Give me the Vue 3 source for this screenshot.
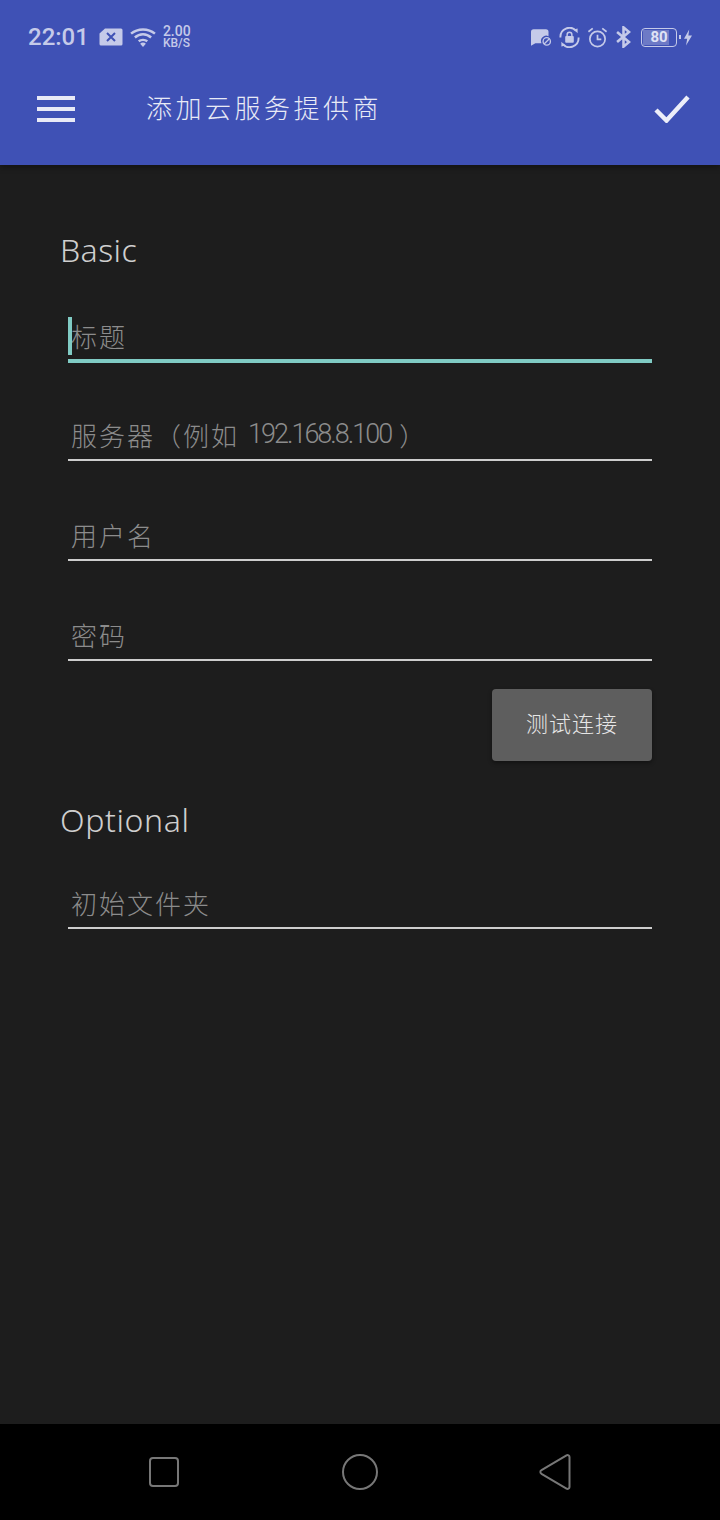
<template>
  <div class="screen">
    <header class="appbar">
      <div class="status">
        <div class="status-left">
          <span class="time">22:01</span>
          <svg class="ic" width="24" height="18" viewBox="0 0 24 18">
            <path d="M6 .5h16a1.500 1.500 0 0 1 1.500 1.500v14a1.500 1.500 0 0 1-1.500 1.500H2A1.500 1.500 0 0 1 .5 16V5.500z" fill="#c5cae9" />
            <path d="M8 5l8 8M16 5l-8 8" stroke="#3f51b5" stroke-width="2" fill="none" />
          </svg>
          <svg class="ic wifi" width="28" height="21" viewBox="0 0 28 22" fill="none" stroke="#c5cae9" stroke-width="2.600">
            <path d="M1.500 7C8.500 1 19.500 1 26.500 7" />
            <path d="M5.500 11C10.500 6.500 17.500 6.500 22.500 11" />
            <path d="M9.500 15C12 13 16 13 18.500 15" />
            <path d="M14 21l-3-3.500a4 4 0 0 1 6 0z" fill="#c5cae9" stroke="none" />
          </svg>
          <div class="speed"><span>2.00</span><span class="unit">KB/S</span></div>
        </div>
        <div class="status-right">
          <svg class="ic" width="21" height="18" viewBox="0 0 24 20">
            <path d="M3 1h14a3 3 0 0 1 3 3v5a6 6 0 0 0-8 8H5l-5 3V4a3 3 0 0 1 3-3z" fill="#c5cae9" />
            <circle cx="18" cy="15" r="4.200" fill="none" stroke="#c5cae9" stroke-width="1.500" />
            <path d="M15 18l6-6" stroke="#c5cae9" stroke-width="1.500" />
          </svg>
          <svg class="ic" width="21" height="21" viewBox="0 0 22 22" fill="none">
            <path d="M18 4A9.500 9.500 0 0 0 1.500 11M4 18a9.500 9.500 0 0 0 16.500-7" stroke="#c5cae9" stroke-width="2" />
            <path d="M15.500 2.500l4-1v5zM6.500 19.500l-4 1v-5z" fill="#c5cae9" />
            <rect x="6.500" y="9.500" width="9" height="7" rx="1" fill="#c5cae9" />
            <path d="M8.500 9.500V8a2.500 2.500 0 0 1 5 0v1.500" stroke="#c5cae9" stroke-width="1.500" />
          </svg>
          <svg class="ic" width="21" height="21" viewBox="0 0 22 22" fill="none" stroke="#c5cae9" stroke-width="1.800">
            <circle cx="11" cy="12.500" r="8" />
            <path d="M11 8v5h4" />
            <path d="M1.500 5L6 1.500M20.500 5L16 1.500" />
          </svg>
          <svg class="ic" width="17" height="22" viewBox="0 0 18 24" fill="none" stroke="#c5cae9" stroke-width="2.800">
            <path d="M2 6.500l13 11-6 5V1.500l6 5-13 11" />
          </svg>
          <div class="battery">
            <div class="battery-body"><span class="battery-fill"></span><span class="battery-num">80</span></div>
            <span class="battery-tip"></span>
          </div>
          <svg class="ic bolt" width="8" height="19" viewBox="0 0 10 20">
            <path d="M6.500 0L0 11.500h4L2.500 20 10 7.500H5.500z" fill="#c5cae9" />
          </svg>
        </div>
      </div>
      <div class="toolbar">
        <button class="icon-btn menu" aria-label="menu">
          <span></span><span></span><span></span>
        </button>
        <h1 class="title">添加云服务提供商</h1>
        <svg class="check" width="36" height="28" viewBox="0 0 36 28" fill="none" stroke="#eceef9" stroke-width="4.500">
          <path d="M2 15l10.500 10.500L34 2" />
        </svg>
      </div>
    </header>

    <main class="content">
      <h2 class="section">Basic</h2>
      <div class="field focused">
        <span class="caret"></span>
        <div class="hint">标题</div>
      </div>
      <div class="field">
        <div class="hint">服务器（例如<span class="digits">192.168.8.100</span><span class="close">）</span></div>
      </div>
      <div v-for="f in basicFields" :key="f" class="field">
        <div class="hint">{{ f }}</div>
      </div>
      <div class="actions">
        <button class="test">测试连接</button>
      </div>
      <h2 class="section optional">Optional</h2>
      <div class="field tight">
        <div class="hint">初始文件夹</div>
      </div>
    </main>

    <nav class="navbar">
      <svg width="30" height="30" viewBox="0 0 30 30" fill="none" stroke="#777" stroke-width="2">
        <rect x="1" y="1" width="28" height="28" rx="3" />
      </svg>
      <svg class="home" width="38" height="38" viewBox="0 0 38 38" fill="none" stroke="#777" stroke-width="2">
        <circle cx="19" cy="19" r="17" />
      </svg>
      <svg width="32" height="38" viewBox="0 0 32 38" fill="none" stroke="#777" stroke-width="2">
        <path d="M2.500 17.200L27.500 2.300a2 2 0 0 1 3 1.700v30a2 2 0 0 1-3 1.700L2.500 20.800a2 2 0 0 1 0-3.600z" />
      </svg>
    </nav>
  </div>
</template>

<script setup>
const basicFields = ['用户名', '密码']
</script>

<style scoped>
.screen {
  width: 720px;
  height: 1520px;
  display: flex;
  flex-direction: column;
  background: #1d1d1d;
  font-family: "Noto Sans CJK SC", "Noto Sans", sans-serif;
  font-weight: 300;
}
.appbar {
  background: #3f51b5;
  height: 165px;
  flex: none;
  box-shadow: 0 2px 6px rgba(0, 0, 0, 0.4);
  z-index: 1;
}
.status {
  height: 74px;
  padding: 0 28px;
  display: flex;
  align-items: center;
  justify-content: space-between;
  color: #c5cae9;
  font-family: Roboto, sans-serif;
  font-weight: 500;
}
.status-left, .status-right {
  display: flex;
  align-items: center;
}
.time {
  font-size: 24px;
  margin-right: 10px;
}
.ic { flex: none; }
.wifi { margin: 0 6px 0 6px; }
.speed {
  display: flex;
  flex-direction: column;
  font-size: 14px;
  line-height: 12px;
}
.unit { font-size: 12px; }
.status-right { gap: 7px; }
.battery {
  display: flex;
  align-items: center;
  margin-left: 2px;
}
.battery-body {
  position: relative;
  width: 36px;
  height: 19px;
  box-sizing: border-box;
  border: 1.500px solid #c5cae9;
  border-radius: 4px;
  text-align: center;
  font-size: 15px;
  font-weight: 700;
  line-height: 16px;
  color: #e0e3f5;
}
.battery-fill {
  position: absolute;
  left: 1px;
  top: 1px;
  bottom: 1px;
  width: 26px;
  background: #6d7ac6;
}
.battery-num { position: relative; }
.battery-tip {
  width: 2px;
  height: 4px;
  margin-left: 2px;
  background: #c5cae9;
}
.bolt { margin-left: -4px; }
.toolbar {
  height: 91px;
  padding: 0 30px 22px 37px;
  display: flex;
  align-items: center;
  box-sizing: border-box;
}
.icon-btn {
  background: none;
  border: 0;
  padding: 0;
}
.menu {
  width: 38px;
  display: flex;
  flex-direction: column;
  gap: 7px;
}
.menu span {
  height: 4px;
  background: #e8eaf6;
}
.title {
  margin: -3px 0 0 71px;
  flex: 1;
  font-size: 26px;
  font-weight: 300;
  letter-spacing: 3.500px;
  color: #e8eaf6;
  line-height: 36px;
}
.check { flex: none; }
.content {
  flex: 1;
  padding: 60px 68px 0 60px;
}
.section {
  margin: 0;
  font-size: 32px;
  font-weight: 300;
  letter-spacing: 0.400px;
  line-height: 50px;
  color: #cfcfcf;
  font-family: "Noto Sans", sans-serif;
}
.optional {
  margin-top: 34px;
  letter-spacing: 0.600px;
}
.field {
  position: relative;
  margin: 50px 0 0 8px;
  height: 50px;
  box-sizing: border-box;
  border-bottom: 2px solid #cdcdcd;
}
.field.tight {
  margin-top: 34px;
}
.field.focused {
  margin: 38px 0 -2px 8px;
  border-bottom: 4px solid #80cbc4;
}
.hint {
  height: 100%;
  box-sizing: border-box;
  padding: 0 0 2px 3px;
  display: flex;
  align-items: center;
  color: #8c8c8c;
  font-size: 26px;
  letter-spacing: 2px;
  white-space: nowrap;
}
.digits {
  margin-left: 9px;
  font-family: Roboto, sans-serif;
  font-size: 27px;
  letter-spacing: -2px;
}
.close { margin-left: 8px; }
.caret {
  position: absolute;
  left: 0;
  top: 4px;
  width: 4px;
  height: 38px;
  background: #80cbc4;
}
.actions {
  display: flex;
  justify-content: flex-end;
  margin-top: 28px;
}
.test {
  width: 160px;
  height: 72px;
  padding: 0 0 6px;
  background: #5e5e5e;
  border: 0;
  border-radius: 4px;
  box-shadow: 0 2px 4px rgba(0, 0, 0, 0.4);
  color: #e6e6e6;
  font: inherit;
  font-size: 22px;
  letter-spacing: 1px;
}
.navbar {
  height: 96px;
  flex: none;
  background: #000;
  display: flex;
  align-items: center;
  justify-content: space-between;
  padding: 0 149px;
  box-sizing: border-box;
}
.home { margin-left: 2px; }
</style>

<style>
html, body { margin: 0; background: #1d1d1d; }
</style>
